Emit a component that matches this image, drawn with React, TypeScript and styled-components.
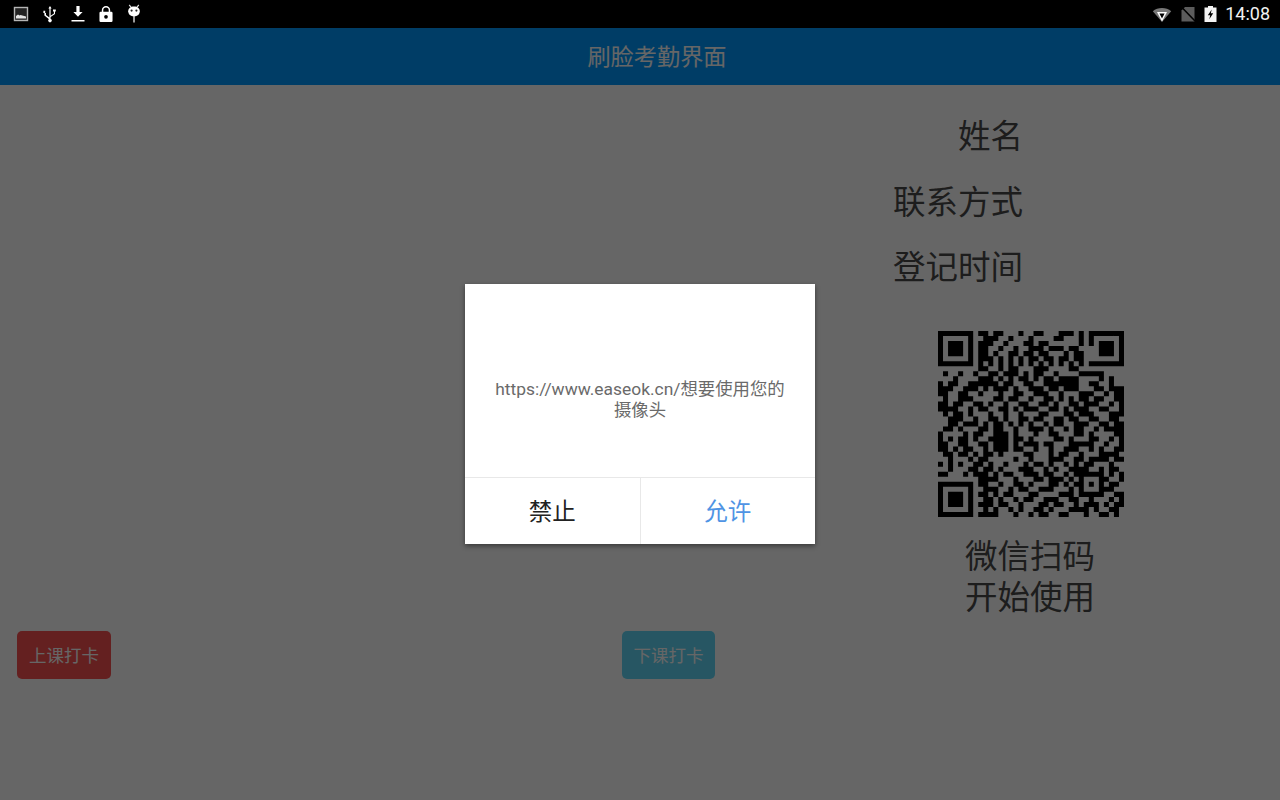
import React from "react";
import styled, { createGlobalStyle } from "styled-components";

const GlobalStyle = createGlobalStyle`
  html, body {
    margin: 0;
    padding: 0;
    height: 100%;
    background: #fff;
    font-family: "Roboto", "Noto Sans CJK SC", sans-serif;
  }
`;

const Page = styled.div`
  position: relative;
  width: 1280px;
  height: 800px;
  overflow: hidden;
  background: #fff;
`;

const StatusBar = styled.div`
  position: relative;
  z-index: 2;
  height: 28px;
  background: #000;
  display: flex;
  align-items: center;
  justify-content: space-between;
  padding: 0 10px 0 13px;
`;

const StatusGroup = styled.div<{ $gap: number }>`
  display: flex;
  align-items: center;
  gap: ${(p) => p.$gap}px;
`;

const Clock = styled.span`
  color: #f2f2f2;
  font-size: 18px;
  line-height: 28px;
`;

const Header = styled.header`
  height: 57px;
  background: #009aff;
  color: #fff;
  font-size: 23.2px;
  line-height: 55px;
  text-align: center;
  padding-left: 34px;
  font-family: "Noto Sans CJK SC", sans-serif;
`;

const Content = styled.main`
  display: flex;
  height: 715px;
`;

const CameraColumn = styled.section`
  width: 890px;
  box-sizing: border-box;
  padding: 546px 0 0 17px;
  display: flex;
  align-items: flex-start;
  gap: 511px;
`;

const PunchButton = styled.button<{ $color: string }>`
  width: ${(p) => (p.$color === "red" ? 94 : 93)}px;
  height: 48px;
  padding: 0 0 2px;
  border: 0;
  border-radius: 5px;
  background: ${(p) => (p.$color === "red" ? "#f95050" : "#62d8f8")};
  color: #fff;
  font-size: 17.5px;
  font-family: "Noto Sans CJK SC", sans-serif;
`;

const InfoColumn = styled.aside`
  width: 280px;
  display: flex;
  flex-direction: column;
  align-items: center;
  padding-top: 16px;
  font-family: "Noto Sans CJK SC", sans-serif;
  color: #4a4a4a;
`;

const InfoList = styled.div`
  align-self: stretch;
  padding-right: 147px;
  text-align: right;
`;

const InfoLabel = styled.div`
  font-size: 32.5px;
  line-height: 65.5px;
`;

const QrCode = styled.svg`
  display: block;
  width: 186px;
  height: 186px;
  margin: 33px 0 0 1px;
  filter: blur(0.7px);
`;

const ScanHint = styled.div`
  margin-top: 16px;
  font-size: 32.5px;
  line-height: 41px;
  text-align: center;
`;

const Scrim = styled.div`
  position: absolute;
  z-index: 1;
  left: 0;
  right: 0;
  top: 28px;
  bottom: 0;
  background: rgba(0, 0, 0, 0.6);
  display: flex;
  align-items: center;
  justify-content: center;
`;

const Dialog = styled.div`
  width: 350px;
  height: 260px;
  background: #fff;
  display: flex;
  flex-direction: column;
  box-shadow: 0 2px 5px rgba(0, 0, 0, 0.45);
`;

const DialogMessage = styled.div`
  flex: 1;
  box-sizing: border-box;
  padding: 39px 28px 0;
  display: flex;
  align-items: center;
  justify-content: center;
  text-align: center;
  color: #6a6a6a;
  font-size: 17.4px;
  line-height: 21px;
`;

const DialogActions = styled.div`
  box-sizing: border-box;
  height: 67px;
  display: flex;
  border-top: 1px solid #e8e8e8;
`;

const DialogButton = styled.button<{ $primary?: boolean }>`
  flex: 1;
  border: 0;
  padding: 0 0 3px;
  background: #fff;
  font-size: 23.5px;
  font-family: "Noto Sans CJK SC", sans-serif;
  color: ${(p) => (p.$primary ? "#4f94e4" : "#222")};
  & + & {
    border-left: 1px solid #e8e8e8;
  }
`;

const qrRows = [
  "1111111011011000100110001110101111111",
  "1000001001110010001000011000101000001",
  "1011101011100100011011000000101011101",
  "1011101011001001001110111011000011101",
  "1011101011010011011011000101100011101",
  "1000001011101010101101101101100000001",
  "1111111010101010101010101010101111111",
  "0000000011001011000111000011000000000",
  "0100100100110111010110010000111110000",
  "0001000011101010110101101111000010100",
  "1011001111110110011001111111001100100",
  "1110011101011101001110110111000110111",
  "1100110010001001100111001000111001011",
  "0100111000011011001001101010110110011",
  "1101100110100100110011010011011100101",
  "1111001011001101011100110101110011001",
  "0101101000100100100011000110111000111",
  "0011100100110100110110011011001100110",
  "0011011101011010101001011001110011011",
  "0110100011011001001110100101100101111",
  "1000010110011101000100110001101000011",
  "1010110100111101101000011010001100101",
  "1100110011011101011101100011111001001",
  "1101011001011101100100100111001010011",
  "0110110101101000011000101100100011110",
  "0010001011000001001000111001101111011",
  "1010100110100100010110100101011000100",
  "0010001101101000111001010011110010110",
  "1100010111010110011101100101111110101",
  "0000000011110001000110111010100011001",
  "1111111011001001101000110101101010110",
  "1000001001110010110011100010100011100",
  "1011101011010110001100001110111110011",
  "1011101001101001011001110011001000101",
  "1011101011101100100011011001011101011",
  "1000001001010010100110100011110100110",
  "1111111011110001001011001100010011010",
];

const qrPath = qrRows
  .map((row, y) =>
    row
      .split("")
      .map((cell, x) => (cell === "1" ? `M${x} ${y}h1v1h-1z` : ""))
      .join("")
  )
  .join("");

const GalleryIcon = () => (
  <svg width="16" height="16" viewBox="0 0 16 16">
    <rect x="1.5" y="1.5" width="13" height="13" fill="#222" stroke="#b5b5b5" strokeWidth="1.4" />
    <path d="M3 12.500v-2.500l2-1.500 1.500 1 1-.6L13 10.500v2z" fill="#e4e4e4" />
  </svg>
);

const UsbIcon = () => (
  <svg width="14" height="18" viewBox="0 0 14 18">
    <path d="M7 1 5.400 3.400h1v9.200L3 10V8h-.8V5.800H.4V8H1.400v2.600l5 3.800v.9h1.200v-3.200l4.400-3V6.600h.8V4.400H10v2.200h.9v1.900L7.600 10.700V3.400h1z" fill="#fff" />
    <circle cx="7" cy="15.600" r="1.800" fill="#fff" />
  </svg>
);

const DownloadIcon = () => (
  <svg width="14" height="18" viewBox="0 0 14 18">
    <path d="M5.400 1h3.200v6h3L7 11.800 2.400 7h3zM.5 15h13v1.600H.5z" fill="#fff" />
  </svg>
);

const LockIcon = () => (
  <svg width="14" height="18" viewBox="0 0 15 18">
    <path
      fillRule="evenodd"
      d="M3 6.500V5a4.500 4.500 0 0 1 9 0v1.500h1.200a1.300 1.300 0 0 1 1.300 1.300v8.400a1.300 1.300 0 0 1-1.300 1.300H1.800a1.300 1.300 0 0 1-1.300-1.300V7.800a1.300 1.300 0 0 1 1.300-1.300zM4.600 6.500h5.800V5a2.900 2.900 0 0 0-5.800 0zM7.500 10a2 2 0 1 0 0 4 2 2 0 0 0 0-4z"
      fill="#fff"
    />
  </svg>
);

const RobotIcon = () => (
  <svg width="14" height="20" viewBox="0 0 14 20">
    <path d="M2.200 1l2 2.300M11.800 1l-2 2.300" stroke="#ddd" strokeWidth="1.200" />
    <path d="M7 2.500c3.400 0 5.800 2 5.800 4.800S10.400 12.500 7 12.500 1.200 10.100 1.200 7.300 3.600 2.500 7 2.500z" fill="#fff" />
    <circle cx="4.600" cy="6.600" r="1.100" fill="#222" />
    <circle cx="9.400" cy="6.600" r="1.100" fill="#222" />
    <rect x="6.300" y="12" width="1.400" height="6.500" fill="#ddd" />
  </svg>
);

const WifiIcon = () => (
  <svg width="20" height="16" viewBox="0 0 20 16">
    <path d="M10 16 .8 5.200C3.300 3.200 6.500 2 10 2s6.700 1.200 9.200 3.200z" fill="#777" />
    <path d="M5 6h10l-5 9.500z" fill="#fff" />
    <path d="M7.400 7.600h5.200L10 12.600z" fill="#000" />
  </svg>
);

const NoSimIcon = () => (
  <svg width="16" height="16" viewBox="0 0 16 16">
    <path d="M5 1h9.500v14.500h-13V4.500z" fill="#5c5c5c" />
    <path d="M1.500 1 15 15" stroke="#000" strokeWidth="1.600" />
  </svg>
);

const BatteryIcon = () => (
  <svg width="13" height="18" viewBox="0 0 13 18">
    <path d="M4 1h5v1.500h3.500V17H.5V2.500H4z" fill="#f4f4f4" />
    <path d="M7.700 4.500 3.800 10.300h2.400l-.9 4 3.900-6H6.800z" fill="#000" />
  </svg>
);

export default function App() {
  return (
    <Page>
      <GlobalStyle />
      <StatusBar>
        <StatusGroup $gap={14}>
          <GalleryIcon />
          <UsbIcon />
          <DownloadIcon />
          <LockIcon />
          <RobotIcon />
        </StatusGroup>
        <StatusGroup $gap={8}>
          <WifiIcon />
          <NoSimIcon />
          <BatteryIcon />
          <Clock>14:08</Clock>
        </StatusGroup>
      </StatusBar>
      <Header>刷脸考勤界面</Header>
      <Content>
        <CameraColumn>
          <PunchButton $color="red">上课打卡</PunchButton>
          <PunchButton $color="blue">下课打卡</PunchButton>
        </CameraColumn>
        <InfoColumn>
          <InfoList>
            <InfoLabel>姓名</InfoLabel>
            <InfoLabel>联系方式</InfoLabel>
            <InfoLabel>登记时间</InfoLabel>
          </InfoList>
          <QrCode viewBox="0 0 37 37">
            <path d={qrPath} fill="#000" />
          </QrCode>
          <ScanHint>
            微信扫码
            <br />
            开始使用
          </ScanHint>
        </InfoColumn>
      </Content>
      <Scrim>
        <Dialog>
          <DialogMessage>https://www.easeok.cn/想要使用您的摄像头</DialogMessage>
          <DialogActions>
            <DialogButton>禁止</DialogButton>
            <DialogButton $primary>允许</DialogButton>
          </DialogActions>
        </Dialog>
      </Scrim>
    </Page>
  );
}
